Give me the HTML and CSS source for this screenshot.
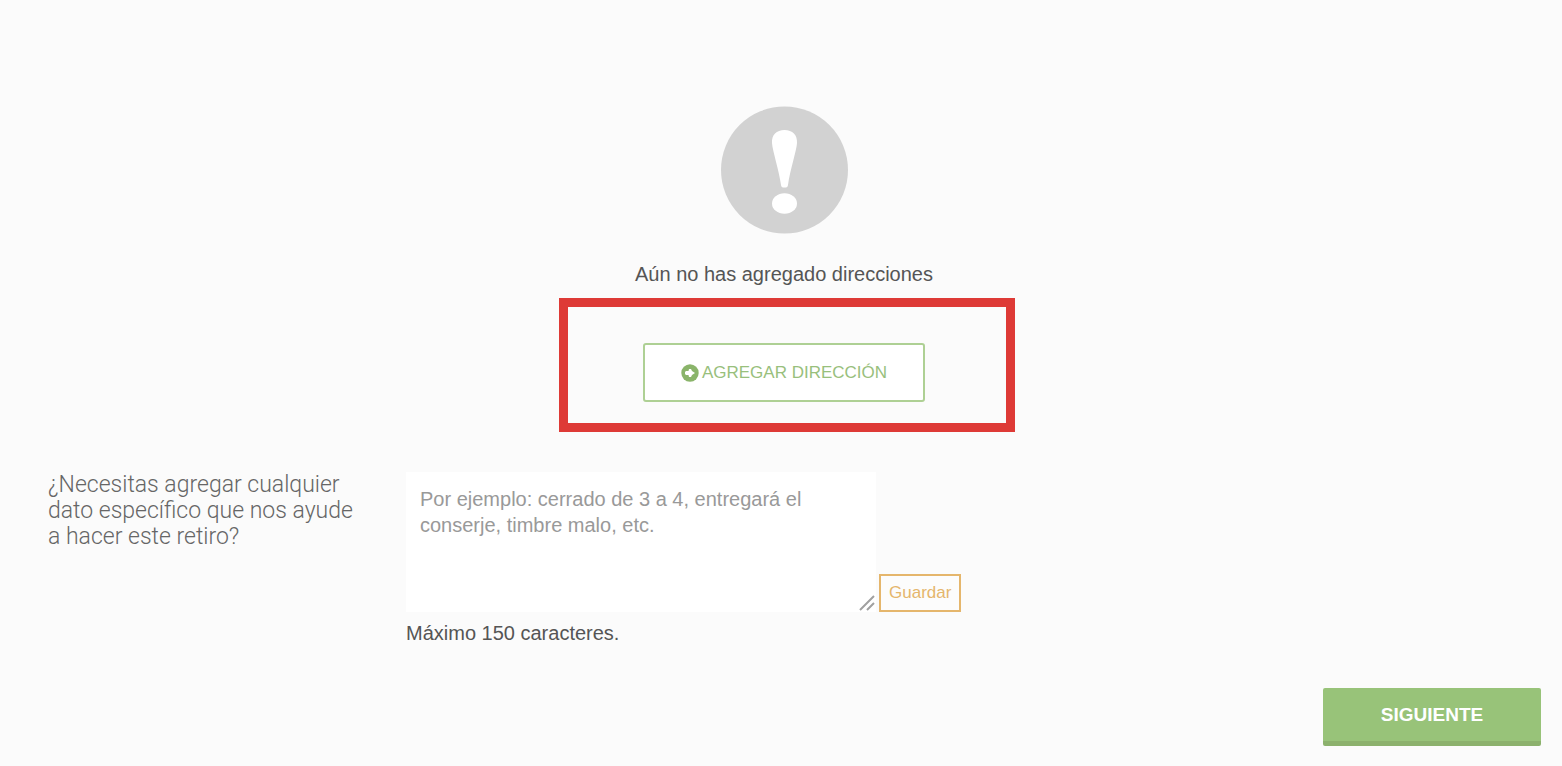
FILE: index.html
```html
<!DOCTYPE html>
<html lang="es">
<head>
    <meta charset="UTF-8">
    <meta name="viewport" content="width=device-width, initial-scale=1.0">
    <title>Direcciones de retiro</title>
    <link rel="stylesheet" href="styles.css">
</head>
<body>
    <main class="container">
        <section class="empty">
            <svg class="empty-icon" viewBox="0 0 128 128" aria-hidden="true">
                <circle cx="64.500" cy="64" r="63.500" fill="#d2d2d2"/>
                <path d="M64.500 24c-8 0-13 5-12.500 13 .5 8 7 27 9 42 .3 2 1 2.500 3.500 2.500s3.200-.5 3.500-2.500c2-15 8.500-34 9-42 .5-8-4.500-13-12.500-13z" fill="#fff"/>
                <ellipse cx="64.500" cy="97.500" rx="12.500" ry="10.300" fill="#fff"/>
            </svg>
            <p class="empty-text">Aún no has agregado direcciones</p>
            <div class="add-wrap">
                <button type="button" class="btn-add">
                    <svg class="add-icon" viewBox="0 0 18 18" aria-hidden="true">
                        <circle cx="9" cy="9" r="8.700" fill="#8ab46a"/>
                        <path d="M8 5h2l1 2 3 2-3 2-1 2H8l-.5-2H5L4 10V8l1-1h2.500z" fill="#fff"/>
                    </svg>
                    AGREGAR DIRECCIÓN
                </button>
                <div class="highlight"></div>
            </div>
        </section>

        <form class="notes">
            <label class="notes-label" for="comment">¿Necesitas agregar cualquier dato específico que nos ayude a hacer este retiro?</label>
            <div class="notes-field">
                <div class="notes-row">
                    <div class="textarea-wrap">
                        <textarea id="comment" name="comment" maxlength="150" placeholder="Por ejemplo: cerrado de 3 a 4, entregará el conserje, timbre malo, etc."></textarea>
                        <svg class="grip" viewBox="0 0 16 16" aria-hidden="true">
                            <path d="M1 15L15 1M8 15l7-7" stroke="#a0a0a0" stroke-width="2" fill="none"/>
                        </svg>
                    </div>
                    <button type="button" class="btn-save">Guardar</button>
                </div>
                <p class="hint">Máximo 150 caracteres.</p>
            </div>
        </form>

        <div class="actions">
            <button type="button" class="btn-next">SIGUIENTE</button>
        </div>
    </main>
</body>
</html>
```
FILE: styles.css
```css
* {
    box-sizing: border-box;
}
body {
    margin: 0;
    background-color: #fbfbfb;
    color: #555;
    font-family: "Liberation Sans", Arial, sans-serif;
    font-size: 20px;
    line-height: 26px;
}
p {
    margin: 0;
}
button {
    font-family: inherit;
    cursor: pointer;
}
.container {
    padding: 106px 21px 20px 27px;
}
.empty {
    display: flex;
    flex-direction: column;
    align-items: center;
}
.empty-icon {
    width: 128px;
    height: 128px;
}
.empty-text {
    margin-top: 27px;
}
.add-wrap {
    position: relative;
    margin-top: 56px;
}
.btn-add {
    display: flex;
    align-items: center;
    justify-content: center;
    gap: 3px;
    height: 59px;
    padding: 0 36px;
    background-color: #fff;
    border: 2px solid #aed094;
    border-radius: 3px;
    color: #98c07c;
    font-size: 17px;
}
.add-icon {
    width: 18px;
    height: 18px;
}
/* red frame around the add button */
.highlight {
    position: absolute;
    top: -45px;
    right: -90px;
    bottom: -30px;
    left: -84px;
    border: 9px solid #de3a36;
    pointer-events: none;
}
.notes {
    display: flex;
    flex-wrap: wrap;
    gap: 38px;
    margin-top: 70px;
    padding-left: 21px;
}
.notes-label {
    width: 320px;
    color: #666;
    font-family: Roboto, sans-serif;
    font-size: 23px;
    font-weight: 300;
}
.notes-row {
    display: flex;
    align-items: flex-end;
    gap: 3px;
}
.textarea-wrap {
    position: relative;
    display: flex;
}
textarea {
    width: 470px;
    height: 140px;
    padding: 14px;
    background-color: #fff;
    border: none;
    color: #555;
    font-family: inherit;
    font-size: 20px;
    line-height: 26px;
}
textarea::placeholder {
    color: #999;
}
textarea::-webkit-resizer {
    display: none;
}
.grip {
    position: absolute;
    right: 1px;
    bottom: 1px;
    width: 16px;
    height: 16px;
    pointer-events: none;
}
.btn-save {
    height: 38px;
    padding: 0 8px;
    background-color: #fcfcfc;
    border: 2px solid #e5b66c;
    color: #e5b66c;
    font-size: 17px;
}
.hint {
    margin-top: 8px;
}
.actions {
    display: flex;
    justify-content: flex-end;
    margin-top: 42px;
}
.btn-next {
    width: 218px;
    height: 58px;
    background-color: #98c379;
    border: none;
    border-bottom: 5px solid #8cb16d;
    border-radius: 2px;
    color: #fff;
    font-size: 19px;
    font-weight: bold;
}
```
